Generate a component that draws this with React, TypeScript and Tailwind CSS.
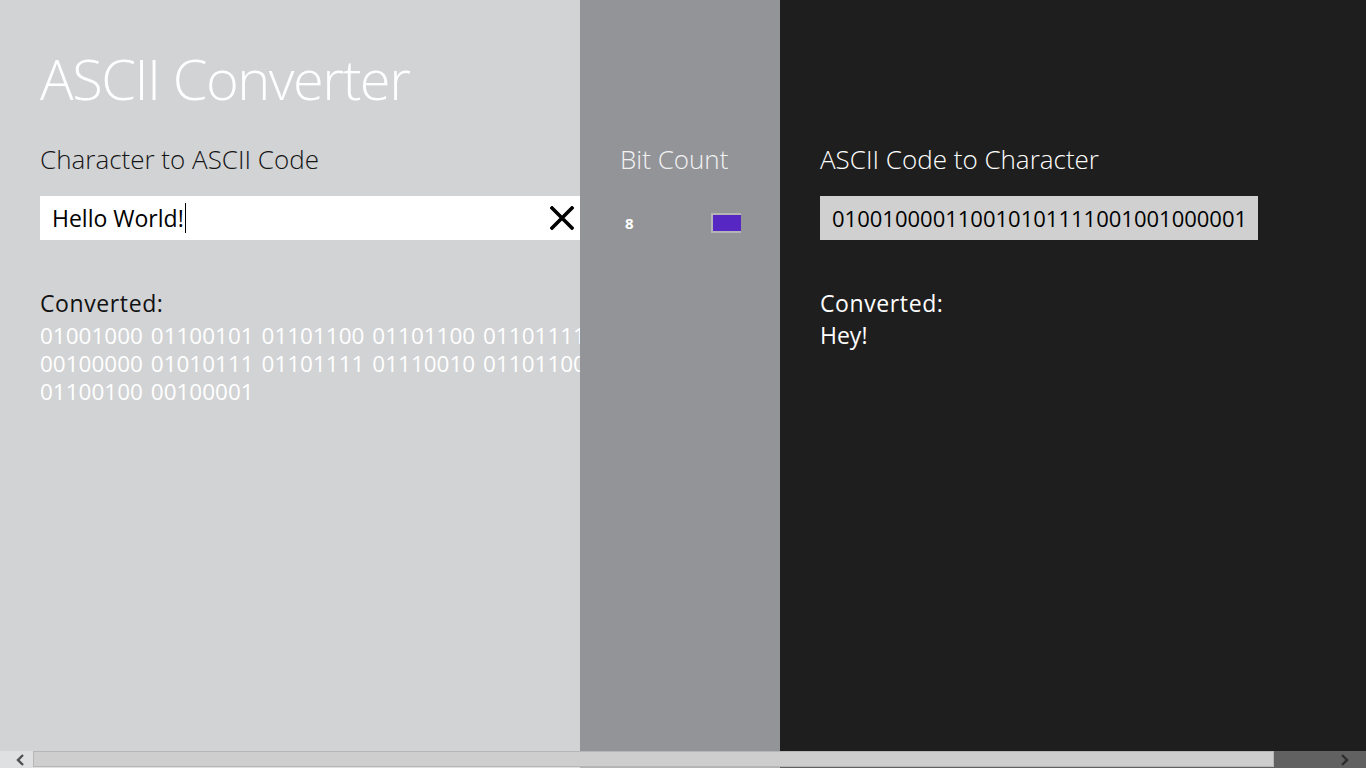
const font = { fontFamily: '"Open Sans", "Noto Sans", sans-serif' };

const leftCodes = [
  "01001000 01100101 01101100 01101100 01101111",
  "00100000 01010111 01101111 01110010 01101100",
  "01100100 00100001",
];

function ClearIcon() {
  return (
    <svg width="24" height="24" viewBox="0 0 24 24" className="shrink-0">
      <path d="M2 2 L22 22 M22 2 L2 22" stroke="#000" strokeWidth="3.6" strokeLinecap="square" />
    </svg>
  );
}

function ScrollBar() {
  return (
    <div className="absolute bottom-0 left-0 flex h-[17px] w-full bg-white/30">
      <div className="flex w-[33px] items-center pl-[15px]">
        <svg width="10" height="12" viewBox="0 0 10 12">
          <path d="M8 1 L3 6 L8 11" fill="none" stroke="#505050" strokeWidth="2.4" />
        </svg>
      </div>
      <div className="mb-[1px] w-[1241px] border border-[#b6b6b6] bg-[#cecece]" />
      <div className="flex flex-1 items-center justify-end pr-[16px]">
        <svg width="10" height="12" viewBox="0 0 10 12">
          <path d="M2 1 L7 6 L2 11" fill="none" stroke="#2e2e2e" strokeWidth="2.4" />
        </svg>
      </div>
    </div>
  );
}

export default function App() {
  return (
    <div className="relative flex h-[768px] w-[1366px] overflow-hidden" style={font}>
      <section className="w-[580px] shrink-0 overflow-hidden bg-[#d2d3d5] pl-[40px] pt-[46px]">
        <h1 className="whitespace-nowrap text-[56px] font-light leading-[64px] tracking-[-1.5px] text-white">
          ASCII Converter
        </h1>
        <h2 className="mt-[33px] whitespace-nowrap text-[26px] font-light leading-[32px] text-[#151515]">
          Character to ASCII Code
        </h2>
        <div className="mt-[21px] flex h-[44px] w-[540px] items-center bg-white pl-[12px] pr-[6px]">
          <span className="text-[23px] leading-[30px] text-black">Hello World!</span>
          <span className="ml-[1px] h-[30px] w-[1px] bg-black" />
          <span className="flex-1" />
          <ClearIcon />
        </div>
        <div className="mt-[47px] text-[23px] leading-[32px] tracking-[0.6px] text-[#111]">
          Converted:
        </div>
        <div className="w-[600px] pt-[3px] text-[22.5px] leading-[28px] text-white [word-spacing:2px]">
          {leftCodes.map((line) => (
            <div key={line} className="whitespace-nowrap">
              {line}
            </div>
          ))}
        </div>
      </section>

      <section className="w-[200px] shrink-0 overflow-hidden bg-[#939498] pl-[40px] pt-[143px]">
        <h2 className="whitespace-nowrap text-[26px] font-light leading-[32px] text-[#f2f2f2]">
          Bit Count
        </h2>
        <div className="mt-[38px] flex h-[20px] items-center">
          <span className="ml-[5px] w-[86px] text-[15px] font-bold text-white">8</span>
          <div className="flex h-[20px] w-[30px] border-y-2 border-l-2 border-[#b4b4b4] bg-[#5727c3]" />
        </div>
      </section>

      <section className="flex-1 overflow-hidden bg-[#1e1e1e] pl-[40px] pt-[143px]">
        <h2 className="whitespace-nowrap text-[26px] font-light leading-[32px] text-white">
          ASCII Code to Character
        </h2>
        <div className="mt-[21px] flex h-[44px] w-[438px] items-center bg-[#d0d0d0] pl-[12px]">
          <span className="whitespace-nowrap text-[22px] leading-[30px] text-black">
            010010000110010101111001001000001
          </span>
        </div>
        <div className="mt-[47px] text-[23px] leading-[32px] tracking-[0.6px] text-white">
          Converted:
        </div>
        <div className="text-[23px] leading-[32px] text-white">Hey!</div>
      </section>

      <ScrollBar />
    </div>
  );
}
